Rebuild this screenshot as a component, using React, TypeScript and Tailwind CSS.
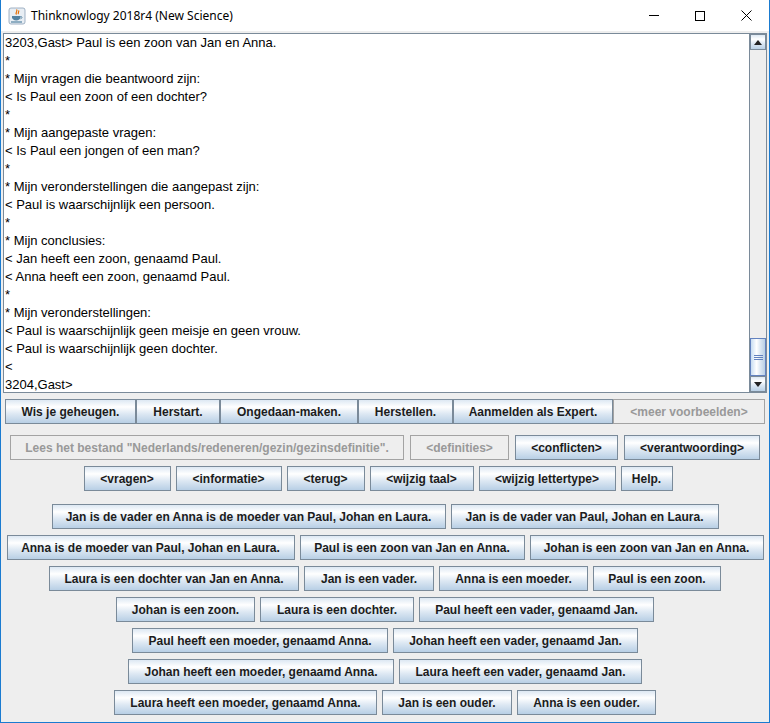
import React from "react";

const lines = [
  "3203,Gast> Paul is een zoon van Jan en Anna.",
  "*",
  "* Mijn vragen die beantwoord zijn:",
  "< Is Paul een zoon of een dochter?",
  "*",
  "* Mijn aangepaste vragen:",
  "< Is Paul een jongen of een man?",
  "*",
  "* Mijn veronderstellingen die aangepast zijn:",
  "< Paul is waarschijnlijk een persoon.",
  "*",
  "* Mijn conclusies:",
  "< Jan heeft een zoon, genaamd Paul.",
  "< Anna heeft een zoon, genaamd Paul.",
  "*",
  "* Mijn veronderstellingen:",
  "< Paul is waarschijnlijk geen meisje en geen vrouw.",
  "< Paul is waarschijnlijk geen dochter.",
  "<",
  "3204,Gast>",
];

type B = { label: string; w: string; disabled?: boolean };

const topRow: B[] = [
  { label: "Wis je geheugen.", w: "w-[131px]" },
  { label: "Herstart.", w: "w-[84px]" },
  { label: "Ongedaan-maken.", w: "w-[138px]" },
  { label: "Herstellen.", w: "w-[95px]" },
  { label: "Aanmelden als Expert.", w: "w-[160px]" },
  { label: "<meer voorbeelden>", w: "w-[152px]", disabled: true },
];

const secondRow: B[] = [
  { label: 'Lees het bestand "Nederlands/redeneren/gezin/gezinsdefinitie".', w: "w-[394px]", disabled: true },
  { label: "<definities>", w: "w-[99px]", disabled: true },
  { label: "<conflicten>", w: "w-[103px]" },
  { label: "<verantwoording>", w: "w-[136px]" },
];

const thirdRow: B[] = [
  { label: "<vragen>", w: "w-[87px]" },
  { label: "<informatie>", w: "w-[106px]" },
  { label: "<terug>", w: "w-[78px]" },
  { label: "<wijzig taal>", w: "w-[104px]" },
  { label: "<wijzig lettertype>", w: "w-[137px]" },
  { label: "Help.", w: "w-[52px]" },
];

const exampleRows: B[][] = [
  [
    { label: "Jan is de vader en Anna is de moeder van Paul, Johan en Laura.", w: "w-[394px]" },
    { label: "Jan is de vader van Paul, Johan en Laura.", w: "w-[268px]" },
  ],
  [
    { label: "Anna is de moeder van Paul, Johan en Laura.", w: "w-[288px]" },
    { label: "Paul is een zoon van Jan en Anna.", w: "w-[225px]" },
    { label: "Johan is een zoon van Jan en Anna.", w: "w-[234px]" },
  ],
  [
    { label: "Laura is een dochter van Jan en Anna.", w: "w-[250px]" },
    { label: "Jan is een vader.", w: "w-[130px]" },
    { label: "Anna is een moeder.", w: "w-[149px]" },
    { label: "Paul is een zoon.", w: "w-[128px]" },
  ],
  [
    { label: "Johan is een zoon.", w: "w-[139px]" },
    { label: "Laura is een dochter.", w: "w-[154px]" },
    { label: "Paul heeft een vader, genaamd Jan.", w: "w-[235px]" },
  ],
  [
    { label: "Paul heeft een moeder, genaamd Anna.", w: "w-[256px]" },
    { label: "Johan heeft een vader, genaamd Jan.", w: "w-[245px]" },
  ],
  [
    { label: "Johan heeft een moeder, genaamd Anna.", w: "w-[266px]" },
    { label: "Laura heeft een vader, genaamd Jan.", w: "w-[243px]" },
  ],
  [
    { label: "Laura heeft een moeder, genaamd Anna.", w: "w-[263px]" },
    { label: "Jan is een ouder.", w: "w-[130px]" },
    { label: "Anna is een ouder.", w: "w-[139px]" },
  ],
];

const oceanGradient =
  "bg-[linear-gradient(to_bottom,#dde8f3_0%,#ffffff_30%,#dde8f3_60%,#b8cfe5_100%)]";

function JButton({ label, w, disabled }: B) {
  return (
    <div
      className={`${w} h-[25px] shrink-0 flex items-center justify-center whitespace-nowrap text-[12px] font-bold border ${
        disabled
          ? "border-[#a3a3a3] text-[#999999] bg-[#eeeeee]"
          : `border-[#7a8a99] text-[#1c1c1c] ${oceanGradient}`
      }`}
    >
      {label}
    </div>
  );
}

// little java cup in the title bar
function JavaIcon() {
  return (
    <svg width="18" height="18" viewBox="0 0 18 18">
      <rect x="1" y="1" width="16" height="16" rx="2" fill="#e8eef4" stroke="#8aa0b6" strokeWidth="0.8" />
      <path d="M8.5 2.5c1.8 1.6-1.8 2.8 0 5M10.5 3.5c1.2 1.1-1.2 2.1 0 3.6" stroke="#e76f00" strokeWidth="1.2" fill="none" />
      <path d="M4 9h8.5v1.3c0 2-2 3.2-4.25 3.2S4 12.3 4 10.3z" fill="#5382a1" />
      <path d="M12.5 9.6c1.8-.4 2.1 1.6.1 2.2" stroke="#5382a1" strokeWidth="1" fill="none" />
      <path d="M3 15h11" stroke="#5382a1" strokeWidth="1.2" />
    </svg>
  );
}

function ArrowButton({ up }: { up?: boolean }) {
  return (
    <div className={`h-[16px] flex items-center justify-center border border-[#7a8a99] ${oceanGradient}`}>
      <svg width="8" height="5" viewBox="0 0 8 5">
        {up ? <path d="M0 5L4 0L8 5z" fill="#222" /> : <path d="M0 0L8 0L4 5z" fill="#222" />}
      </svg>
    </div>
  );
}

function ScrollBar() {
  return (
    <div className="w-[17px] shrink-0 flex flex-col bg-[#eeeeee] border-l border-[#7a8a99]">
      <ArrowButton up />
      <div className="flex-1 flex flex-col justify-end">
        <div className="h-[38px] border border-[#6382bf] bg-[linear-gradient(to_right,#c8ddf2,#ffffff_40%,#dde8f3_65%,#b8cfe5)] flex flex-col items-center justify-center gap-[1px]">
          <div className="w-[9px] h-[1px] bg-[#6382bf]" />
          <div className="w-[9px] h-[1px] bg-[#6382bf]" />
          <div className="w-[9px] h-[1px] bg-[#6382bf]" />
        </div>
      </div>
      <ArrowButton />
    </div>
  );
}

function FlowRow({ items, className = "" }: { items: B[]; className?: string }) {
  return (
    <div className={`flex justify-center gap-[5px] ${className}`}>
      {items.map((b) => (
        <JButton key={b.label} {...b} />
      ))}
    </div>
  );
}

export default function App() {
  return (
    <div className="w-[770px] h-[723px] flex flex-col bg-[#eeeeee] border-x border-b border-[#1a7bd0] font-['Liberation_Sans',Arial,sans-serif] overflow-hidden">
      <div className="h-[31px] shrink-0 bg-white flex items-center">
        <div className="ml-[7px] mr-[5px] flex items-center">
          <JavaIcon />
        </div>
        <span className="text-[12px] text-black font-['Noto_Sans',sans-serif] mt-[1px]">
          Thinknowlogy 2018r4 (New Science)
        </span>
        <div className="ml-auto flex h-full">
          <div className="w-[46px] flex items-center justify-center">
            <div className="w-[10px] h-[1px] bg-black" />
          </div>
          <div className="w-[46px] flex items-center justify-center">
            <div className="w-[10px] h-[10px] border border-black" />
          </div>
          <div className="w-[46px] flex items-center justify-center">
            <svg width="11" height="11" viewBox="0 0 11 11">
              <path d="M0.5 0.5L10.5 10.5M10.5 0.5L0.5 10.5" stroke="#000" strokeWidth="1" />
            </svg>
          </div>
        </div>
      </div>

      <div className="mt-[2px] ml-[2px] mr-[2px] h-[360px] shrink-0 flex border border-[#7a8a99] bg-white">
        <div className="flex-1 pl-[1px] text-[13px] leading-[18px] text-black whitespace-pre overflow-hidden">
          {lines.map((l, i) => (
            <div key={i}>{l}</div>
          ))}
        </div>
        <ScrollBar />
      </div>

      <div className="mt-[6px] ml-[4px] flex">
        {topRow.map((b) => (
          <JButton key={b.label} {...b} />
        ))}
      </div>

      <FlowRow items={secondRow} className="mt-[11px] gap-[6px]" />
      <FlowRow items={thirdRow} className="mt-[6px] pr-[14px]" />

      <div className="mt-[13px] flex flex-col gap-[6px]">
        {exampleRows.map((row, i) => (
          <FlowRow key={i} items={row} />
        ))}
      </div>
    </div>
  );
}
